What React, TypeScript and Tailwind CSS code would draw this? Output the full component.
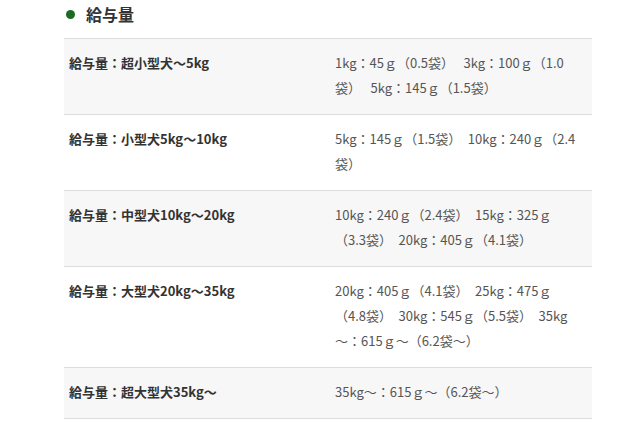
import React from 'react';

interface FeedRow {
    label: string;
    lines: string[];
}

// lines are split where the reference wraps them
const rows: FeedRow[] = [
    { label: '給与量：超小型犬～5kg', lines: ['1kg：45ｇ（0.5袋）　 3kg：100ｇ（1.0', '袋）　 5kg：145ｇ（1.5袋）'] },
    { label: '給与量：小型犬5kg～10kg', lines: ['5kg：145ｇ（1.5袋）　10kg：240ｇ（2.4', '袋）'] },
    { label: '給与量：中型犬10kg～20kg', lines: ['10kg：240ｇ（2.4袋）　15kg：325ｇ', '（3.3袋）　20kg：405ｇ（4.1袋）'] },
    { label: '給与量：大型犬20kg～35kg', lines: ['20kg：405ｇ（4.1袋）　25kg：475ｇ', '（4.8袋）　30kg：545ｇ（5.5袋）　35kg', '～：615ｇ～（6.2袋～）'] },
    { label: '給与量：超大型犬35kg～', lines: ['35kg～：615ｇ～（6.2袋～）'] },
];

export default function App() {
    return (
        <div
            className="w-[640px] h-[441px] bg-white text-[#555] overflow-hidden"
            style={{ fontFamily: '"Noto Sans CJK JP", "Noto Sans", sans-serif' }}
        >
            <h2 className="flex items-center gap-[11px] pl-[66px] h-[28px] text-[16px] font-bold text-[#333]">
                <span className="w-[9px] h-[9px] rounded-full bg-[#1d6b22]" />
                給与量
            </h2>

            <div className="ml-[64px] w-[528px] mt-[10px] border-b border-[#dddddd]">
                {rows.map((row, i) => (
                    <div
                        key={row.label}
                        className={`flex border-t border-[#dddddd] pt-[11px] pb-[14px] text-[13px] leading-[25px] ${i % 2 === 0 ? 'bg-[#f7f7f7]' : 'bg-white'}`}
                    >
                        <div className="w-[266px] shrink-0 pl-[5px] font-bold text-[#333]">
                            {row.label}
                        </div>
                        <div className="flex-1 pl-[5px] pr-[10px]">
                            {row.lines.map((line) => (
                                <div key={line} className="whitespace-pre">
                                    {line}
                                </div>
                            ))}
                        </div>
                    </div>
                ))}
            </div>
        </div>
    );
}
